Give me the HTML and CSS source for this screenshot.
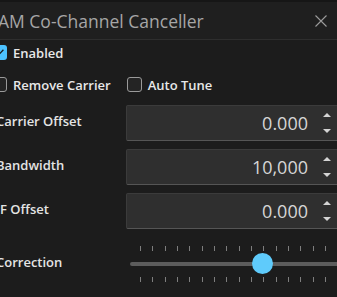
FILE: index.html
```html
<!DOCTYPE html>
<html>
<head>
<meta charset="utf-8">
<link rel="stylesheet" href="styles.css">
</head>
<body>
<div class="window">
  <div class="titlebar">
    <span class="title">AM Co-Channel Canceller</span>
    <svg class="close" width="12" height="12" viewBox="0 0 12 12"><path d="M0.5 0.5 L11.5 11.5 M11.5 0.5 L0.5 11.5" stroke="#9c9c9c" stroke-width="1.1" fill="none"/></svg>
  </div>
  <div class="content">
    <div class="checkrow">
      <label class="check"><span class="box on"><svg width="15" height="15" viewBox="0 0 15 15"><path d="M3.6 7.8 L6.2 10.3 L11.4 4.8" stroke="#1a1a1a" stroke-width="1.3" fill="none"/></svg></span>Enabled</label>
    </div>
    <div class="checkrow">
      <label class="check"><span class="box"></span>Remove Carrier</label>
      <label class="check"><span class="box"></span>Auto Tune</label>
    </div>
    <div class="field">
      <span class="label">Carrier Offset</span>
      <div class="spin"><span class="value">0.000</span><span class="arrows"><i class="up"></i><i class="down"></i></span></div>
    </div>
    <div class="field">
      <span class="label">Bandwidth</span>
      <div class="spin"><span class="value">10,000</span><span class="arrows"><i class="up"></i><i class="down"></i></span></div>
    </div>
    <div class="field">
      <span class="label">IF Offset</span>
      <div class="spin"><span class="value">0.000</span><span class="arrows"><i class="up"></i><i class="down"></i></span></div>
    </div>
    <div class="field slider-field">
      <span class="label">Correction</span>
      <div class="slider">
        <div class="ticks"><i></i><i></i><i></i><i></i><i></i><i></i><i></i><i></i><i></i><i></i><i></i><i></i><i></i><i></i><i></i><i></i></div>
        <div class="track"><span class="thumb"></span></div>
        <div class="ticks"><i></i><i></i><i></i><i></i><i></i><i></i><i></i><i></i><i></i><i></i><i></i><i></i><i></i><i></i><i></i><i></i></div>
      </div>
    </div>
  </div>
</div>
</body>
</html>
```
FILE: styles.css
```css
html, body {
  margin: 0;
  padding: 0;
  background: #1c1c1c;
  overflow: hidden;
  width: 337px;
  height: 297px;
}
.window {
  width: 350px;
  margin-left: -8px;
  font-family: "Open Sans", "Noto Sans", sans-serif;
  color: #e6e6e6;
}
.titlebar {
  background: #1f1f1f;
  border-top: 2px solid #161616;
  box-sizing: border-box;
  border-bottom: 1px solid #2e2e2e;
  height: 40px;
  display: flex;
  align-items: center;
  justify-content: space-between;
  padding: 0 15px 0 6px;
}
.title {
  font-size: 17.5px;
  color: #a6a6a6;
}
.close {
  display: block;
}
.content {
  padding-top: 5px;
}
.checkrow {
  display: flex;
  height: 15px;
  margin-bottom: 17px;
  gap: 16px;
}
.checkrow:nth-child(2) {
  margin-bottom: 13px;
}
.check {
  display: flex;
  align-items: center;
  gap: 6px;
  font-size: 13px;
  font-weight: 600;
  color: #e8e8e8;
}
.box {
  width: 15px;
  height: 15px;
  box-sizing: border-box;
  border: 1px solid #9a9a9a;
  border-radius: 3px;
  background: #242424;
  display: block;
}
.box.on {
  border: none;
  background: #4cc2ff;
}
.box svg {
  display: block;
}
.field {
  display: grid;
  grid-template-columns: 134px 1fr;
  align-items: center;
  height: 36px;
  margin-bottom: 8px;
}
.label {
  padding-left: 4px;
  padding-bottom: 4px;
  font-size: 13px;
  font-weight: 600;
  color: #e4e4e4;
}
.spin {
  height: 36px;
  box-sizing: border-box;
  background: #2f2f2f;
  border: 1px solid #3b3b3b;
  border-bottom-color: #555;
  border-radius: 2px 0 0 2px;
  display: flex;
  align-items: center;
  justify-content: flex-end;
  padding-right: 10px;
}
.value {
  font-size: 18px;
  color: #d6d6d6;
  margin-right: 15px;
}
.arrows {
  display: flex;
  flex-direction: column;
  gap: 12px;
}
.arrows i {
  display: block;
  width: 0;
  height: 0;
  border-left: 4px solid transparent;
  border-right: 4px solid transparent;
}
.arrows .up {
  border-bottom: 4px solid #d4d4d4;
}
.arrows .down {
  border-top: 4px solid #d4d4d4;
}
.slider-field {
  height: 36px;
  margin-top: 17px;
}
.slider {
  height: 36px;
  display: flex;
  flex-direction: column;
  justify-content: space-between;
  padding-left: 4px;
}
.ticks {
  display: flex;
  justify-content: space-between;
  width: 186px;
  margin-left: 10px;
  height: 5px;
}
.ticks i {
  display: block;
  width: 1px;
  height: 5px;
  background: #7e7e7e;
}
.track {
  position: relative;
  height: 4px;
  background: #5c5c5c;
  border-radius: 2px;
}
.thumb {
  position: absolute;
  left: 122px;
  top: -9px;
  width: 21px;
  height: 21px;
  border-radius: 50%;
  background: #5fcbfb;
}
```
